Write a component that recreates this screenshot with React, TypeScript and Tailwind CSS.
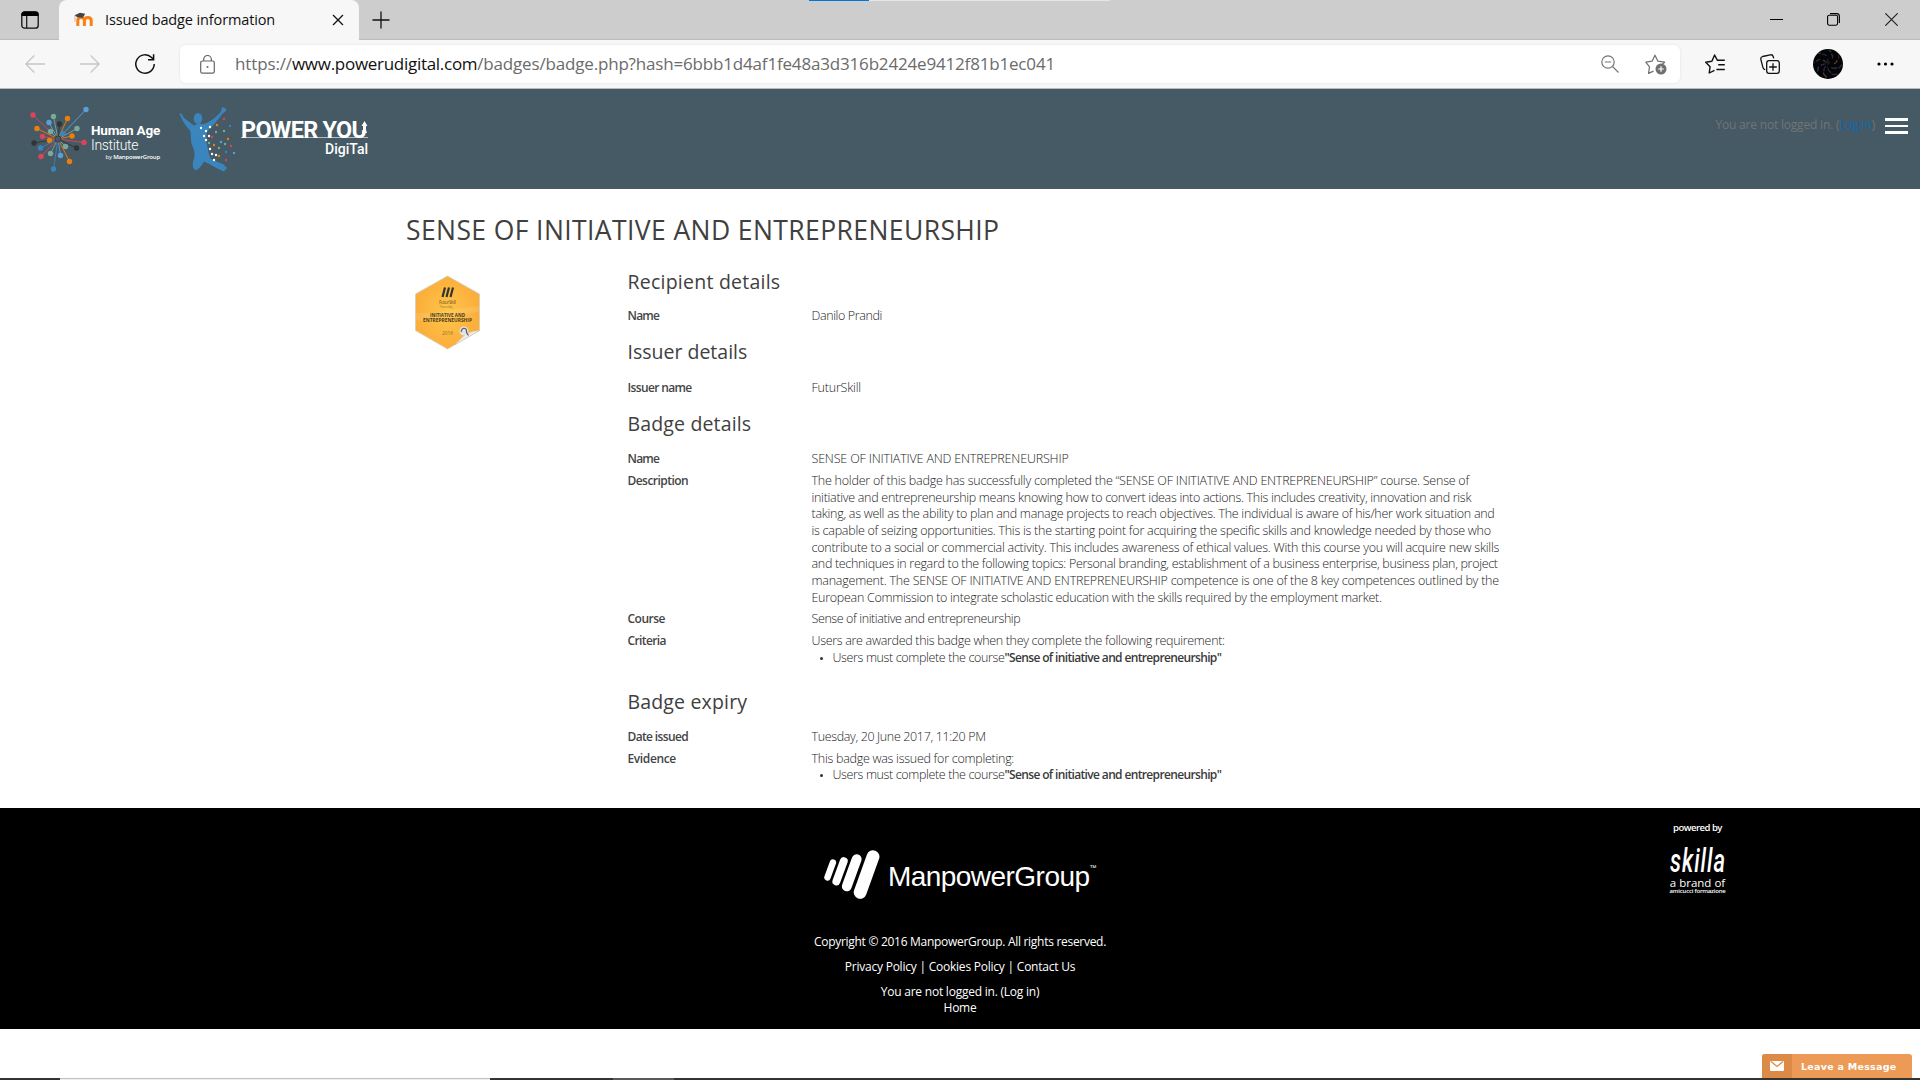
import React, { useLayoutEffect, useRef, useState } from "react";

/** One line of text whose letter spacing is tuned so that it is `w` pixels wide. */
function Line({ w, className = "", children }: { w: number; className?: string; children: React.ReactNode }) {
  const ref = useRef<HTMLSpanElement>(null);
  const [spacing, setSpacing] = useState(0);
  useLayoutEffect(() => {
    const el = ref.current;
    if (!el) return;
    const n = (el.textContent || "").length;
    setSpacing((w - el.offsetWidth) / n);
  }, [w]);
  return (
    <span ref={ref} className={"inline-block whitespace-pre " + className} style={{ letterSpacing: spacing + "px" }}>
      {children}
    </span>
  );
}

const ui = "font-['Open_Sans','Noto_Sans',sans-serif]";

function TabStrip() {
  return (
    <div className="relative flex h-10 w-full items-stretch bg-[#cdcdcd]">
      <div className="absolute left-[809px] top-0 flex h-px w-[301px]">
        <div className="w-[60px] bg-[#0078d7]" />
        <div className="flex-1 bg-[#e6e6e6]" />
      </div>
      <div className="flex w-[59px] items-center border-b border-[#bcbcbc] pl-[21px]">
        <svg width="18" height="18" viewBox="0 0 18 18" fill="none">
          <rect x=".8" y=".8" width="16.4" height="16.4" rx="2.8" stroke="#111" strokeWidth="1.3" />
          <path d="M.5 5V3.5a3 3 0 0 1 3-3h11a3 3 0 0 1 3 3V5z" fill="#000" />
          <path d="M5.7 5v12" stroke="#111" strokeWidth="1.2" />
        </svg>
      </div>
      <div className="flex w-[300px] items-center rounded-t-lg bg-[#f7f7f7] pl-[14px]">
        <svg width="22" height="16" viewBox="0 0 22 16" fill="none">
          <path d="M4.8 14V8.5c0-4 6.6-4 6.6 0V14M11.4 8.5c0-4 6.8-4 6.8 0V14" stroke="#f98012" strokeWidth="3" />
          <path d="M1.5 3.2 7 .8l5.2 1-2.4 4-5.4-.6z" fill="#444" />
          <path d="M2 3.5v6" stroke="#c9a98c" strokeWidth=".9" />
        </svg>
        <div className={ui + " ml-[10px] flex-1 text-[14.5px] leading-5 text-[#111]"}>
          <Line w={170}>Issued badge information</Line>
        </div>
        <svg className="mr-[15px]" width="12" height="12" viewBox="0 0 12 12" stroke="#111" strokeWidth="1.3">
          <path d="M1 1l10 10M11 1L1 11" />
        </svg>
      </div>
      <div className="flex flex-1 items-center justify-between border-b border-[#bcbcbc] pl-[13px] pr-[22px]">
        <svg width="18" height="18" viewBox="0 0 18 18" stroke="#111" strokeWidth="1.3">
          <path d="M9 .5v17M.5 9h17" />
        </svg>
        <div className="flex items-center">
          <svg width="13" height="13" viewBox="0 0 13 13" stroke="#000" strokeWidth="1">
            <path d="M0 6.5h13" />
          </svg>
          <svg className="ml-[44px]" width="13" height="13" viewBox="0 0 13 13" fill="none" stroke="#000" strokeWidth="1.1">
            <rect x=".6" y="2.2" width="10" height="10" rx="1.6" />
            <path d="M3 .6h6.6a2.8 2.8 0 0 1 2.8 2.8V10" />
          </svg>
          <svg className="ml-[45px]" width="13" height="13" viewBox="0 0 13 13" stroke="#222" strokeWidth="1.2">
            <path d="M.3.3l12.4 12.4M12.7.3L.3 12.7" />
          </svg>
        </div>
      </div>
    </div>
  );
}

const SPECKS = Array.from({ length: 80 }, (_, i) => {
  const a = i * 12.9898;
  const r = 14 * Math.sqrt(((i * 37) % 80) / 80);
  return {
    x: 15 + r * Math.cos(a),
    y: 15 + r * Math.sin(a),
    c: ["#28334f", "#4b2b52", "#554330", "#20444a", "#333"][(i * 3) % 5],
  };
});

function Toolbar() {
  return (
    <div className="flex h-[49px] w-full items-center border-b border-[#b9b9b9] bg-[#f7f7f7]">
      <svg className="ml-[25px]" width="20" height="18" viewBox="0 0 20 18" fill="none" stroke="#c6c6c6" strokeWidth="1.3">
        <path d="M20 9H.8M9.3.5L.8 9l8.5 8.5" />
      </svg>
      <svg className="ml-[35px]" width="20" height="18" viewBox="0 0 20 18" fill="none" stroke="#c6c6c6" strokeWidth="1.3">
        <path d="M0 9h19.2M10.7.5L19.2 9l-8.5 8.5" />
      </svg>
      <svg className="ml-[35px]" width="20" height="20" viewBox="0 0 20 20" fill="none" stroke="#111" strokeWidth="1.5">
        <path d="M19.2 10a9.2 9.2 0 1 1-2.6-6.4l1.9 2M18.6.3v5.4h-5.6" />
      </svg>
      <div className="ml-[25px] flex h-[38px] w-[1500px] items-center rounded-md bg-white shadow-[0_0_3px_rgba(0,0,0,0.09)]">
        <svg className="ml-5" width="15" height="19" viewBox="0 0 15 19" fill="none" stroke="#666" strokeWidth="1.2">
          <rect x=".7" y="6" width="13.6" height="12.2" rx="1.6" />
          <path d="M3.7 6V4.3a3.8 3.8 0 0 1 7.6 0V6" />
          <circle cx="7.5" cy="12" r="1" fill="#666" stroke="none" />
        </svg>
        <div className={ui + " ml-5 flex-1 text-[17px] leading-6 text-[#6b6b6b]"}>
          <Line w={57}>https://</Line>
          <Line w={185} className="text-[#111]">www.powerudigital.com</Line>
          <Line w={578}>/badges/badge.php?hash=6bbb1d4af1fe48a3d316b2424e9412f81b1ec041</Line>
        </div>
        <svg width="18" height="18" viewBox="0 0 18 18" fill="none" stroke="#777" strokeWidth="1.2">
          <circle cx="7" cy="7" r="6.2" />
          <path d="M11.5 11.5l6 6M3.8 7h6.4" />
        </svg>
        <svg className="ml-[26px] mr-[13px]" width="22" height="21" viewBox="0 0 22 21" fill="none" stroke="#707070" strokeWidth="1.2">
          <path d="M8.5 17.1l-5 2.3 1-6.5L.8 8.2l6.3-1L10 1.2l2.9 6 6.7 1-2.2 2" strokeLinejoin="round" />
          <circle cx="16" cy="15" r="5.5" fill="#707070" stroke="none" />
          <path d="M16 12.2v5.6M13.2 15h5.6" stroke="#fff" />
        </svg>
      </div>
      <svg className="ml-[25px]" width="20" height="20" viewBox="0 0 20 20" fill="none" stroke="#111" strokeWidth="1.4" strokeLinejoin="round">
        <path d="M9.5 16.3L4.2 19l.9-6.3L.7 8.2l6.2-1L9.6 1l2.8 5.3h7.4M13.2 10.8h6.6M11.4 15.5h8.4" />
      </svg>
      <svg className="ml-[35px]" width="20" height="20" viewBox="0 0 20 20" fill="none" stroke="#111" strokeWidth="1.3">
        <rect x="6.7" y="6.7" width="12.6" height="12.6" rx="2.3" />
        <path d="M13 9.2v7.6M9.2 13h7.6M5.2 15.6c-1.6-.2-2-1-2.3-2.2L.9 5.6C.5 4 1 3 2.6 2.5L10.3.8c1.6-.3 2.5.2 2.9 1.7l.5 1.8" />
      </svg>
      <svg className="ml-[33px]" width="30" height="30" viewBox="0 0 30 30">
        <circle cx="15" cy="15" r="15" fill="#050508" />
        {SPECKS.map((s, i) => (
          <circle key={i} cx={s.x} cy={s.y} r=".7" fill={s.c} />
        ))}
      </svg>
      <svg className="ml-[34px]" width="17" height="4" viewBox="0 0 17 4" fill="#000">
        <circle cx="2" cy="2" r="1.6" />
        <circle cx="8.5" cy="2" r="1.6" />
        <circle cx="15" cy="2" r="1.6" />
      </svg>
    </div>
  );
}

const RAYS: [number, number, string][] = [
  [32, 26, "#dc4459"], [85, 20.5, "#5b9fd8"], [52.5, 27.5, "#7ba89a"], [66.5, 29.5, "#ef7d0a"],
  [48, 33.5, "#5b9fd8"], [58.5, 35, "#333"], [36, 39.5, "#ef7d0a"], [76, 39.5, "#7ba89a"],
  [49.5, 42.5, "#7ba89a"], [62, 44.5, "#3a83bd"], [41.5, 47.5, "#dc4459"], [71, 47, "#ef7d0a"],
  [33, 54, "#333"], [48.5, 51.5, "#ef7d0a"], [83, 53.5, "#dc4459"], [39.5, 59, "#3a83bd"],
  [64.5, 57.5, "#7ba89a"], [75.5, 59, "#333"], [40, 67.5, "#dc4459"], [49.5, 64.5, "#7ba89a"],
  [59.5, 66.5, "#5b9fd8"], [68.5, 72.5, "#ef7d0a"], [52.5, 80, "#3a83bd"],
];
const CONFETTI: [number, number, string][] = [
  [22, 22, "#fff"], [31, 21, "#fff"], [27, 25, "#fff"], [25, 30, "#fff"], [30, 30, "#fff"], [27, 34, "#fff"],
  [31, 43, "#fff"], [33, 48, "#fff"], [37, 49, "#fff"], [35, 54, "#fff"], [45, 13, "#dc4459"], [38, 19, "#ef7d0a"],
  [51, 20, "#3a83bd"], [37, 26, "#7ba89a"], [45, 25, "#7ba89a"], [33, 31, "#dc4459"], [49, 33, "#ef7d0a"],
  [30, 37, "#7ba89a"], [35, 39, "#ef7d0a"], [42, 36, "#5b9fd8"], [46, 38, "#7ba89a"], [52, 40, "#dc4459"],
  [40, 42, "#7ba89a"], [47, 46, "#3a83bd"], [40, 50, "#ef7d0a"], [55, 47, "#5b9fd8"], [47, 54, "#dc4459"],
];

function SiteHeader() {
  return (
    <header className="flex h-[100px] w-full items-start bg-[#455a64]">
      <svg className="ml-[27px] mt-[14px] shrink-0" width="64" height="72" viewBox="26 14 64 72">
        {RAYS.map(([x, y, c], i) => (
          <g key={i}>
            <path d={`M57 50L${x} ${y}`} stroke={c} strokeWidth=".9" />
            <circle cx={x} cy={y} r="2.7" fill={c} />
          </g>
        ))}
        <circle cx="57" cy="50" r="3.2" fill="#455a64" stroke="#333" strokeWidth=".8" />
      </svg>
      <div className="flex w-[69px] flex-col items-end pt-[32px] text-white">
        <div className="w-full font-[Roboto,sans-serif] text-[13.5px] font-bold leading-[18px]"><Line w={69}>Human Age</Line></div>
        <div className="w-full font-[Roboto,sans-serif] text-[14px] font-light leading-[13px]"><Line w={47}>Institute</Line></div>
        <div className="font-['Open_Sans',sans-serif] text-[6px] leading-[11px]"><Line w={55}>by <b className="font-semibold">ManpowerGroup</b></Line></div>
      </div>
      <svg className="ml-[19px] mt-[17px] shrink-0" width="58" height="66" viewBox="0 0 58 66">
        <g fill="#3a85bd">
          <ellipse cx="19" cy="12.5" rx="4.2" ry="5.5" />
          <path d="M0 8l2.5-.5L5 12l10 7.500 4-2 6 .5C32 16 38 10 42 5.500L43 1l4 1.500L47 5 43.500 7.500C39 14 33 21 28.500 25c-2 5-1.500 10 0 16 1 5 1.500 9 3.500 12 5 2 9 4 12 5l4 4-3 3.500C38 63 32 58.500 25 55.500c-2 3-4 7-7.500 8.500-4 0-4.500-6-3-9.500 1.500-5 1.500-9-.5-13-3-6-1.500-11-3-17C7 20 3.500 15.500 2 11z" />
        </g>
        {CONFETTI.map(([x, y, c], i) => (
          <circle key={i} cx={x} cy={y} r="1.2" fill={c} />
        ))}
      </svg>
      <div className="ml-[4px] w-[127px] pt-[27px] text-right text-white">
        <div className="relative h-[25px] text-left font-[Roboto,sans-serif] text-[23.4px] font-bold leading-[28px]">
          <Line w={125}>POWER YOU</Line>
          <div className="absolute bottom-[3px] left-0 h-px w-full bg-white/60" />
          <svg className="absolute right-0 top-[5px]" width="7" height="12" viewBox="0 0 7 12">
            <path d="M0 0h7v9H0z" fill="#455a64" />
            <path d="M3.5 0l3 5H5v4l1 3H1l1-3V5H.5z" fill="#fff" />
          </svg>
        </div>
        <div className="font-[Roboto,sans-serif] text-[14px] font-medium leading-[17px]"><Line w={43}>DigiTal</Line></div>
      </div>
      <div className={ui + " flex flex-1 justify-end pr-[46px] pt-[26px] text-[12px] leading-5 text-[#747474]"}>
        <Line w={160}>You are not logged in. (<span className="text-[#0a6ab5]">Log in</span>)</Line>
      </div>
      <div className="-ml-[36px] mr-[12px] mt-[29px] flex flex-col gap-[4px]">
        <div className="h-[2.5px] w-[23px] bg-white" />
        <div className="h-[2.5px] w-[23px] bg-white" />
        <div className="h-[2.5px] w-[23px] bg-white" />
      </div>
    </header>
  );
}

function Badge() {
  return (
    <svg width="68" height="76" viewBox="0 0 68 76" className="mt-[25px]">
      <defs>
        <radialGradient id="gold">
          <stop offset="0" stopColor="#ffc64a" />
          <stop offset="1" stopColor="#fbae3a" />
        </radialGradient>
      </defs>
      <path d="M33.5 1L65.5 19v36.5L33.5 74 1.5 55.5V19z" fill="url(#gold)" stroke="#d5cfc0" strokeWidth=".8" />
      <path d="M2 38c20 2 40-5 63-7v6C40 40 20 48 2 45z" fill="#fff" opacity=".1" />
      <path d="M31 12.500l-2.500 9.500M35 12.500l-2.500 9.500M39 12.500l-2.500 9.500" stroke="#333" strokeWidth="2.2" />
      <g textAnchor="middle" fontFamily="Open Sans, sans-serif" fill="#4a3b1c">
        <text x="33.5" y="28.5" fontSize="4.5" textLength="17" opacity=".8">FuturSkill</text>
        <text x="32" y="32.700" fontSize="3" textLength="13" opacity=".5">Powered by</text>
        <text x="33.5" y="41.600" fontSize="4.8" fontWeight="700" textLength="35" lengthAdjust="spacingAndGlyphs">INITIATIVE AND</text>
        <text x="33.5" y="47" fontSize="4.8" fontWeight="700" textLength="49" lengthAdjust="spacingAndGlyphs">ENTREPRENEURSHIP</text>
        <text x="33.5" y="59.500" fontSize="5" textLength="11" opacity=".6">2016</text>
      </g>
      <path d="M40.5 70l8-8c3-3 8-6 17-6.5z" fill="#ececec" stroke="#c8b890" strokeWidth=".4" />
      <circle cx="50" cy="56" r="4.5" fill="#e4e4e4" />
      <path d="M47.5 57c-1-4 5-5 5-1.5v2l2 3" fill="none" stroke="#5b6476" strokeWidth="1.3" />
    </svg>
  );
}

const body = "text-[12.5px] font-light leading-[16.67px] text-[#1c1c1c]";

function Heading({ w, className, children }: { w: number; className: string; children: string }) {
  return (
    <h3 className={"h-7 text-[19.5px] font-normal leading-7 text-[#404040] " + className}>
      <Line w={w}>{children}</Line>
    </h3>
  );
}

function Row({ label, lw, children }: { label: string; lw: number; children: React.ReactNode }) {
  return (
    <div className={"mb-[5.2px] flex " + body}>
      <div className="w-[184px] shrink-0 text-[12px] font-semibold text-[#444]"><Line w={lw}>{label}</Line></div>
      <div className="flex flex-col items-start">{children}</div>
    </div>
  );
}

function Requirement() {
  return (
    <div className="flex items-center">
      <span className="ml-2 mr-[10px] size-[3px] rounded-full bg-[#333]" />
      <Line w={172}>Users must complete the course</Line>
      <Line w={217} className="text-[12px] font-semibold text-[#3a3a3a]">"Sense of initiative and entrepreneurship"</Line>
    </div>
  );
}

const DESCRIPTION: [string, number][] = [
  ["The holder of this badge has successfully completed the “SENSE OF INITIATIVE AND ENTREPRENEURSHIP” course. Sense of", 657],
  ["initiative and entrepreneurship means knowing how to convert ideas into actions. This includes creativity, innovation and risk", 660],
  ["taking, as well as the ability to plan and manage projects to reach objectives. The individual is aware of his/her work situation and", 683],
  ["is capable of seizing opportunities. This is the starting point for acquiring the specific skills and knowledge needed by those who", 679],
  ["contribute to a social or commercial activity. This includes awareness of ethical values. With this course you will acquire new skills", 688],
  ["and techniques in regard to the following topics: Personal branding, establishment of a business enterprise, business plan, project", 686],
  ["management. The SENSE OF INITIATIVE AND ENTREPRENEURSHIP competence is one of the 8 key competences outlined by the", 687],
  ["European Commission to integrate scholastic education with the skills required by the employment market.", 570],
];

function Main() {
  return (
    <main className="h-[619px] w-full bg-white px-[406px] pt-[21px] font-['Open_Sans','Noto_Sans',sans-serif]">
      <h1 className="h-10 text-[26.5px] font-normal leading-10 text-[#404040]">
        <Line w={593}>SENSE OF INITIATIVE AND ENTREPRENEURSHIP</Line>
      </h1>
      <div className="flex">
        <div className="w-[221.5px] shrink-0 pl-2"><Badge /></div>
        <div className="flex w-[880px] flex-col">
          <Heading w={153} className="mb-[12.5px] mt-[17.5px]">Recipient details</Heading>
          <Row label="Name" lw={32}><Line w={71}>Danilo Prandi</Line></Row>
          <Heading w={120} className="mb-[14.5px] mt-[8px]">Issuer details</Heading>
          <Row label="Issuer name" lw={64}><Line w={49}>FuturSkill</Line></Row>
          <Heading w={124} className="mb-[12.8px] mt-[8px]">Badge details</Heading>
          <Row label="Name" lw={32}><Line w={257}>SENSE OF INITIATIVE AND ENTREPRENEURSHIP</Line></Row>
          <Row label="Description" lw={61}>
            {DESCRIPTION.map(([text, w]) => (
              <Line key={text} w={w}>{text}</Line>
            ))}
          </Row>
          <Row label="Course" lw={38}><Line w={209}>Sense of initiative and entrepreneurship</Line></Row>
          <Row label="Criteria" lw={38}>
            <Line w={413}>Users are awarded this badge when they complete the following requirement:</Line>
            <Requirement />
          </Row>
          <Heading w={120} className="mb-[13px] mt-[16px]">Badge expiry</Heading>
          <Row label="Date issued" lw={61}><Line w={174}>Tuesday, 20 June 2017, 11:20 PM</Line></Row>
          <Row label="Evidence" lw={48}>
            <Line w={203}>This badge was issued for completing:</Line>
            <Requirement />
          </Row>
        </div>
      </div>
    </main>
  );
}

function Footer() {
  return (
    <footer className="relative flex h-[221px] w-full flex-col items-center bg-black font-['Open_Sans','Noto_Sans',sans-serif] text-[12px] leading-4 text-white">
      <div className="mt-[41px] flex h-[52px] w-[273px] items-start">
        <svg width="58" height="52" viewBox="0 0 58 52" fill="none" stroke="#fff" strokeLinecap="round">
          <path d="M3.5 28.5L9 13.5" strokeWidth="6.5" />
          <path d="M12.5 32.5L20 12" strokeWidth="8" />
          <path d="M23 37.5L33 10" strokeWidth="10" />
          <path d="M36.5 43.5L49.5 7.5" strokeWidth="13" />
        </svg>
        <div className="mt-[12px] flex pl-[7px] font-['Liberation_Sans',sans-serif] text-[28px] leading-8">
          <Line w={202}>ManpowerGroup</Line>
          <span className="-mt-[9px] text-[7px]">™</span>
        </div>
      </div>
      <div className="mt-[33px]"><Line w={292}>Copyright © 2016 ManpowerGroup. All rights reserved.</Line></div>
      <div className="mt-[9px]"><Line w={230}>Privacy Policy | Cookies Policy | Contact Us</Line></div>
      <div className="mt-[9px]"><Line w={159}>You are not logged in. (Log in)</Line></div>
      <div><Line w={33}>Home</Line></div>
      <div className="absolute left-[1668px] top-[12px] flex w-[59px] flex-col items-center">
        <div className="text-[9.5px] font-semibold"><Line w={49}>powered by</Line></div>
        <div className="mt-[8px] h-[32px] w-[56px] font-[Roboto,sans-serif] text-[34px] font-medium italic leading-[32px]">
          <div className="w-[86px] origin-left scale-x-[.65]"><Line w={86}>skilla</Line></div>
        </div>
        <div className="mt-px text-[11.5px] leading-[11px]"><Line w={55}>a brand of</Line></div>
        <div className="text-[6px] font-semibold leading-[7px]"><Line w={56}>amicucci formazione</Line></div>
      </div>
    </footer>
  );
}

export default function App() {
  return (
    <div className="flex h-[1080px] w-[1920px] flex-col overflow-hidden bg-white">
      <TabStrip />
      <Toolbar />
      <SiteHeader />
      <Main />
      <Footer />
      <div className="flex h-[49px] items-end justify-end bg-white pr-2">
        <div className="flex h-6 w-[150px] items-center overflow-hidden rounded-t-[3px] bg-[#ec9a56]">
          <div className="flex h-full w-[30px] items-center justify-center bg-[#dd8a47]">
            <svg width="14" height="10" viewBox="0 0 14 10">
              <rect width="14" height="10" rx="1" fill="#fff" />
              <path d="M1 .5l6 5 6-5" fill="none" stroke="#dd8a47" strokeWidth="1.3" />
            </svg>
          </div>
          <div className="ml-[9px] pt-[2px] font-['DejaVu_Sans',sans-serif] text-[9.5px] font-bold text-white"><Line w={95}>Leave a Message</Line></div>
        </div>
      </div>
      <div className="flex h-[2px] bg-[#333]">
        <div className="ml-[60px] h-full w-[430px] border-t border-[#c0c0c0] bg-[#eee]" />
        <div className="ml-[123px] w-[61px] bg-[#5a5a5a]" />
      </div>
    </div>
  );
}
